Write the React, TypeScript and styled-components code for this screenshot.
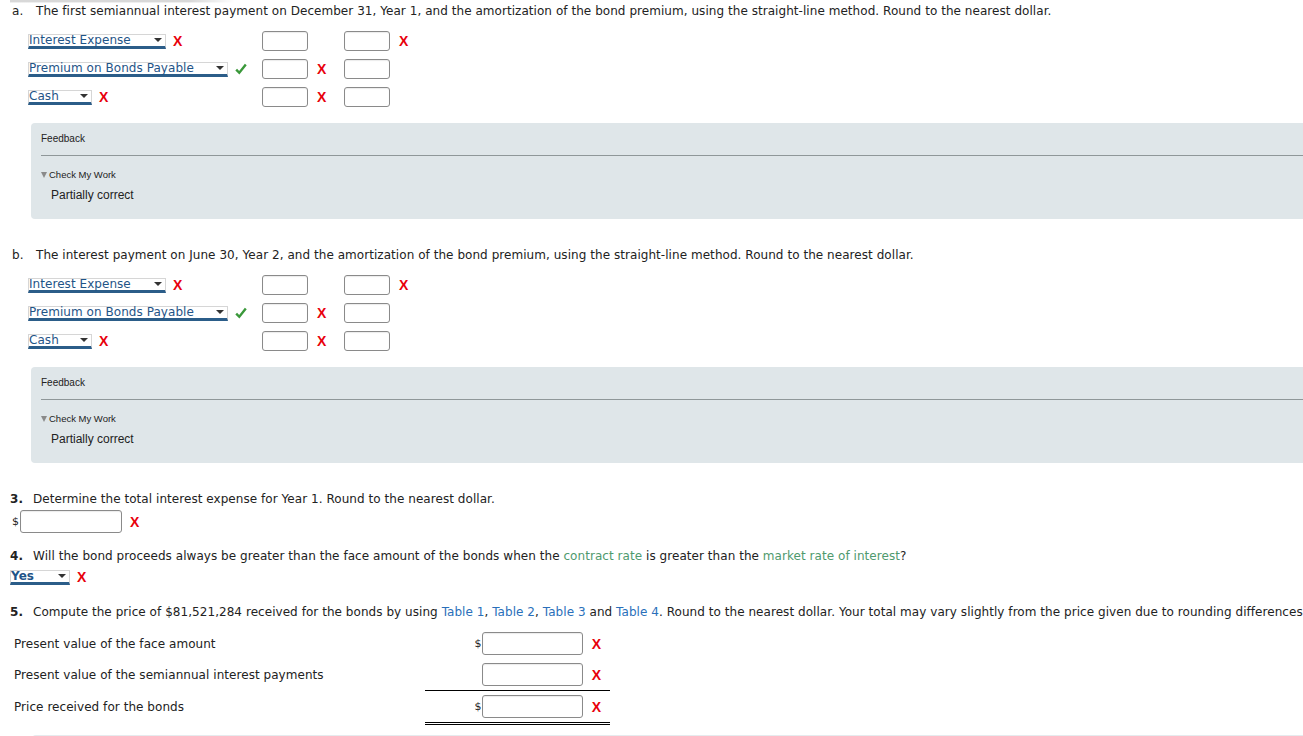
import React from "react";
import styled, { createGlobalStyle } from "styled-components";

const GlobalStyle = createGlobalStyle`
  html, body {
    margin: 0;
    padding: 0;
    background: #ffffff;
    overflow: hidden;
  }
  body {
    font-family: "DejaVu Sans", Verdana, sans-serif;
    font-size: 12px;
    letter-spacing: 0.05px;
    color: #222222;
  }
`;

const Page = styled.div`
  width: 1340px;
  padding-left: 10px;
  box-sizing: border-box;
  white-space: nowrap;
`;

const TopShade = styled.div`
  width: 225px;
  height: 3px;
  background: linear-gradient(to bottom, #d8d8d8 60%, #ffffff), #ffffff;
  mask-image: linear-gradient(to right, #000 80%, transparent);
`;

const QuestionLine = styled.div<{ $top?: number }>`
  display: flex;
  align-items: center;
  height: 16px;
  line-height: 16px;
  margin-top: ${(p) => p.$top ?? 0}px;
`;

const PartLetter = styled.span`
  width: 24px;
  margin-left: 2px;
`;

const Num = styled.b`
  width: 23px;
  font-weight: bold;
`;

const Link = styled.span<{ $tone: "green" | "blue" }>`
  color: ${(p) => (p.$tone === "green" ? "#4f9a6e" : "#2a6fba")};
`;

const Journal = styled.div`
  margin-top: 8px;
  margin-left: 18px;
  display: grid;
  grid-template-columns: 234px 46px 36px 46px 30px;
  grid-auto-rows: 28px;
  align-items: center;
`;

const AccountCell = styled.div`
  display: flex;
  align-items: center;
`;

const Select = styled.div<{ $w: number; $bold?: boolean }>`
  position: relative;
  width: ${(p) => p.$w}px;
  height: 15px;
  box-sizing: border-box;
  border: 1px solid #d6d6d6;
  border-bottom: 3px solid #2b5d89;
  color: #1f5487;
  font-weight: ${(p) => (p.$bold ? "bold" : "normal")};
  line-height: 12px;
  display: flex;
  align-items: center;
  &::after {
    content: "";
    position: absolute;
    right: 3px;
    top: 3px;
    border-left: 4px solid transparent;
    border-right: 4px solid transparent;
    border-top: 4px solid #333333;
  }
`;

const Box = styled.div<{ $w?: number; $h?: number }>`
  width: ${(p) => p.$w ?? 46}px;
  height: ${(p) => p.$h ?? 20}px;
  box-sizing: border-box;
  border: 1px solid #8a8a8a;
  border-radius: 3px;
  background: #ffffff;
  box-shadow: inset 0 1px 1px rgba(0, 0, 0, 0.08);
`;

const Cross = styled.span<{ $ml?: number }>`
  font-family: "Liberation Sans", Arial, sans-serif;
  font-weight: bold;
  font-size: 14px;
  letter-spacing: 0;
  color: #e8000b;
  margin-left: ${(p) => p.$ml ?? 9}px;
  line-height: 14px;
`;

const CheckIcon = styled.svg`
  margin-left: 7px;
  width: 12px;
  height: 12px;
`;

const Check = () => (
  <CheckIcon viewBox="0 0 12 12">
    <path d="M1.2 6.6 L4.3 9.8 L10.8 1.6" fill="none" stroke="#3a983a" strokeWidth="2.4" />
  </CheckIcon>
);

const FeedbackBox = styled.div`
  margin-top: 12px;
  margin-left: 21px;
  background: #dfe6e9;
  border-radius: 4px 0 0 4px;
  padding: 9px 0 16px 10px;
  font-family: "Liberation Sans", Arial, sans-serif;
  letter-spacing: 0;
`;

const FeedbackTitle = styled.div`
  font-size: 10px;
  line-height: 14px;
  color: #222;
`;

const Rule = styled.div`
  margin-top: 9px;
  height: 1px;
  background: #8f9799;
`;

const Toggle = styled.div`
  margin-top: 13px;
  font-size: 9.5px;
  line-height: 12px;
  display: flex;
  align-items: center;
  &::before {
    content: "";
    margin-right: 2px;
    border-left: 3px solid transparent;
    border-right: 3px solid transparent;
    border-top: 6px solid #8a8a8a;
  }
`;

const Status = styled.div`
  margin-top: 6px;
  margin-left: 10px;
  font-size: 12px;
  line-height: 16px;
`;

const AnswerRow = styled.div<{ $top: number; $h: number }>`
  display: flex;
  align-items: center;
  margin-top: ${(p) => p.$top}px;
  height: ${(p) => p.$h}px;
`;

const Dollar = styled.span`
  width: 8px;
  margin-left: 2px;
  font-size: 11px;
`;

const PriceTable = styled.div`
  margin-top: 8px;
  margin-left: 4px;
  display: grid;
  grid-template-columns: 411px 185px;
`;

const PriceLabel = styled.div`
  display: flex;
  align-items: center;
  height: 31px;
`;

const Amount = styled.div<{ $line?: "single" | "double" }>`
  display: flex;
  align-items: center;
  justify-content: flex-end;
  padding-right: 9px;
  height: 31px;
  border-bottom: ${(p) =>
    p.$line === "single" ? "1px solid #000" : p.$line === "double" ? "3px double #000" : "none"};
`;

const AmountDollar = styled.span`
  font-size: 11px;
`;

const BottomBox = styled.div`
  margin-top: 10px;
  margin-left: 22px;
  height: 20px;
  background: #e6ebee;
  border-radius: 4px 0 0 0;
`;

type Line = { account: string; w: number; mark: "x" | "ok"; debitX?: boolean; creditX?: boolean };

const lines: Line[] = [
  { account: "Interest Expense", w: 138, mark: "x", creditX: true },
  { account: "Premium on Bonds Payable", w: 200, mark: "ok", debitX: true },
  { account: "Cash", w: 64, mark: "x", debitX: true },
];

const JournalEntry = () => (
  <Journal>
    {lines.map((l) => (
      <React.Fragment key={l.account}>
        <AccountCell>
          <Select $w={l.w}>{l.account}</Select>
          {l.mark === "x" ? <Cross $ml={7}>X</Cross> : <Check />}
        </AccountCell>
        <Box />
        <div>{l.debitX && <Cross>X</Cross>}</div>
        <Box />
        <div>{l.creditX && <Cross>X</Cross>}</div>
      </React.Fragment>
    ))}
  </Journal>
);

const Feedback = () => (
  <FeedbackBox>
    <FeedbackTitle>Feedback</FeedbackTitle>
    <Rule />
    <Toggle>Check My Work</Toggle>
    <Status>Partially correct</Status>
  </FeedbackBox>
);

export default function App() {
  return (
    <>
      <GlobalStyle />
      <Page>
        <TopShade />
        <QuestionLine>
          <PartLetter>a.</PartLetter>
          The first semiannual interest payment on December 31, Year 1, and the amortization of the
          bond premium, using the straight-line method. Round to the nearest dollar.
        </QuestionLine>
        <JournalEntry />
        <Feedback />

        <QuestionLine $top={28}>
          <PartLetter>b.</PartLetter>
          The interest payment on June 30, Year 2, and the amortization of the bond premium, using the
          straight-line method. Round to the nearest dollar.
        </QuestionLine>
        <JournalEntry />
        <Feedback />

        <QuestionLine $top={28}>
          <Num>3.</Num>
          Determine the total interest expense for Year 1. Round to the nearest dollar.
        </QuestionLine>
        <AnswerRow $top={3} $h={23}>
          <Dollar>$</Dollar>
          <Box $w={102} $h={23} />
          <Cross $ml={8}>X</Cross>
        </AnswerRow>

        <QuestionLine $top={15}>
          <Num>4.</Num>
          Will the bond proceeds always be greater than the face amount of the bonds when the&nbsp;
          <Link $tone="green">contract rate</Link>&nbsp;is greater than the&nbsp;
          <Link $tone="green">market rate of interest</Link>?
        </QuestionLine>
        <AnswerRow $top={3} $h={20}>
          <Select $w={60} $bold>
            Yes
          </Select>
          <Cross $ml={7}>X</Cross>
        </AnswerRow>

        <QuestionLine $top={17}>
          <Num>5.</Num>
          Compute the price of $81,521,284 received for the bonds by using&nbsp;
          <Link $tone="blue">Table 1</Link>,&nbsp;<Link $tone="blue">Table 2</Link>,&nbsp;
          <Link $tone="blue">Table 3</Link>&nbsp;and&nbsp;<Link $tone="blue">Table 4</Link>. Round to the
          nearest dollar. Your total may vary slightly from the price given due to rounding differences.
        </QuestionLine>
        <PriceTable>
          <PriceLabel>Present value of the face amount</PriceLabel>
          <Amount>
            <AmountDollar>$</AmountDollar>
            <Box $w={101} $h={23} />
            <Cross>X</Cross>
          </Amount>
          <PriceLabel>Present value of the semiannual interest payments</PriceLabel>
          <Amount $line="single">
            <Box $w={101} $h={23} />
            <Cross>X</Cross>
          </Amount>
          <PriceLabel>Price received for the bonds</PriceLabel>
          <Amount $line="double">
            <AmountDollar>$</AmountDollar>
            <Box $w={101} $h={23} />
            <Cross>X</Cross>
          </Amount>
        </PriceTable>
        <BottomBox />
      </Page>
    </>
  );
}
